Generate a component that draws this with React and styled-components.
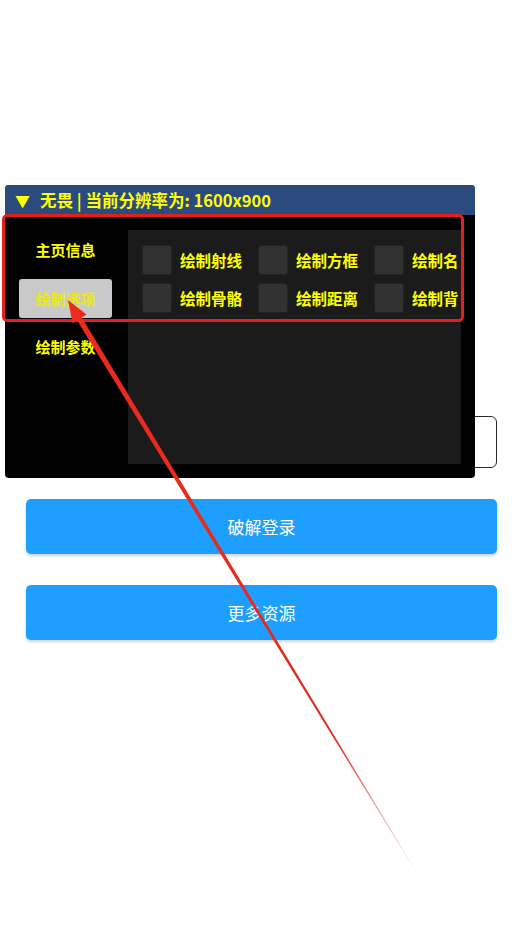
import React from "react"
import styled, { createGlobalStyle } from "styled-components"

const GlobalStyle = createGlobalStyle`
  html, body {
    margin: 0;
    padding: 0;
    background: #ffffff;
  }
  * {
    box-sizing: border-box;
  }
`

const font = `"Noto Sans CJK SC", "Noto Sans", "Liberation Sans", sans-serif`

const Page = styled.div`
  position: relative;
  width: 524px;
  height: 937px;
  overflow: hidden;
  background: #ffffff;
  font-family: ${font};
`

const Form = styled.div`
  display: flex;
  flex-direction: column;
  gap: 31px;
  padding: 416px 27px 0 26px;
`

const Input = styled.div`
  height: 52px;
  border: 1px solid #2a2a2a;
  border-radius: 6px;
  background: #ffffff;
`

const Button = styled.div`
  height: 55px;
  border-radius: 5px;
  background: #1e9fff;
  color: #ffffff;
  font-size: 17px;
  display: flex;
  align-items: center;
  justify-content: center;
  box-shadow: 0 2px 3px rgba(0, 0, 0, 0.18);
`

const Window = styled.div`
  position: absolute;
  left: 5px;
  top: 185px;
  width: 470px;
  height: 293px;
  display: flex;
  flex-direction: column;
  background: #000000;
  border-radius: 4px;
  overflow: hidden;
`

const TitleBar = styled.div`
  height: 30px;
  flex: none;
  background: #2b4a7d;
  color: #ffff00;
  font-weight: 700;
  font-size: 16.5px;
  display: flex;
  align-items: center;
  gap: 10px;
  padding-left: 10px;
  white-space: nowrap;
`

const Arrow = styled.span`
  font-size: 15px;
  line-height: 1;
`

const Body = styled.div`
  flex: 1;
  display: flex;
  padding: 15px 14px 14px 0;
`

const Sidebar = styled.div`
  width: 123px;
  flex: none;
  display: flex;
  flex-direction: column;
  gap: 9.5px;
  padding-left: 14px;
`

const Tab = styled.div`
  width: 93px;
  height: 39px;
  border-radius: 3px;
  background: ${(p) => (p.$active ? "#c9c9c9" : "transparent")};
  color: ${(p) => (p.$active ? "#eaea10" : "#ffff00")};
  font-size: 15px;
  font-weight: 700;
  display: flex;
  align-items: center;
  justify-content: center;
`

const Panel = styled.div`
  flex: 1;
  background: #1b1b1b;
  overflow: hidden;
  padding: 15px 0 0 14px;
`

const Grid = styled.div`
  display: grid;
  grid-template-columns: repeat(3, 116px);
  row-gap: 8px;
`

const Option = styled.div`
  display: flex;
  align-items: center;
  gap: 8px;
  white-space: nowrap;
`

const Box = styled.div`
  width: 30px;
  height: 30px;
  flex: none;
  border-radius: 3px;
  background: #323232;
  border: 1px solid #232323;
`

const Label = styled.span`
  color: #ffff00;
  font-size: 15.5px;
  font-weight: 700;
`

const Overlay = styled.svg`
  position: absolute;
  left: 0;
  top: 0;
  pointer-events: none;
`

const options = ["绘制射线", "绘制方框", "绘制名", "绘制骨骼", "绘制距离", "绘制背"]

export default function App() {
  return (
    <Page>
      <GlobalStyle />
      <Form>
        <Input />
        <Button>破解登录</Button>
        <Button>更多资源</Button>
      </Form>

      <Window>
        <TitleBar>
          <Arrow>▼</Arrow>
          <span>无畏 | 当前分辨率为: 1600x900</span>
        </TitleBar>
        <Body>
          <Sidebar>
            <Tab>主页信息</Tab>
            <Tab $active>绘制选项</Tab>
            <Tab>绘制参数</Tab>
          </Sidebar>
          <Panel>
            <Grid>
              {options.map((o) => (
                <Option key={o}>
                  <Box />
                  <Label>{o}</Label>
                </Option>
              ))}
            </Grid>
          </Panel>
        </Body>
      </Window>

      <Overlay width="524" height="937" viewBox="0 0 524 937">
        <defs>
          <linearGradient id="fade" x1="68" y1="300" x2="418" y2="875" gradientUnits="userSpaceOnUse">
            <stop offset="0" stopColor="#ee2a1f" stopOpacity="1" />
            <stop offset="0.75" stopColor="#e02a20" stopOpacity="1" />
            <stop offset="1" stopColor="#e02a20" stopOpacity="0" />
          </linearGradient>
        </defs>
        <rect x="3.5" y="215.5" width="459" height="105" rx="4" fill="none" stroke="#e3201b" strokeWidth="3" />
        <polygon points="77.2,320.4 81.6,317.2 418.4,875 417.8,875.2" fill="url(#fade)" />
        <polygon points="68,300 72.6,323.5 86.6,314.6" fill="#ee2a1f" />
      </Overlay>
    </Page>
  )
}
